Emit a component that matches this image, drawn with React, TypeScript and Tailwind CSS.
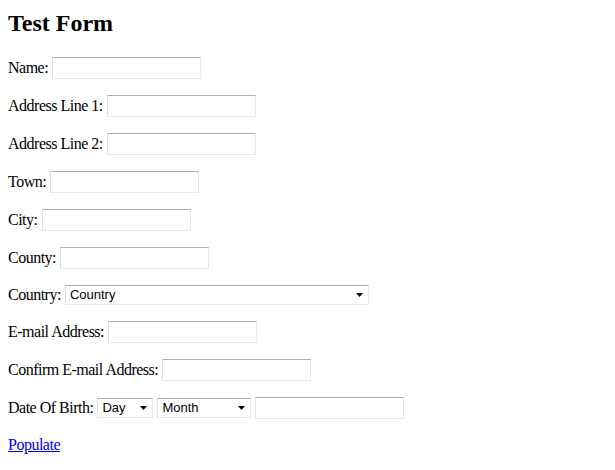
import { ReactNode } from "react";

const serif = "font-['Liberation_Serif','Times_New_Roman',serif]";
const boxBorder =
  "border border-t-[#abadb3] border-l-[#dbdfe6] border-r-[#e3e9ef] border-b-[#e3e9ef]";

function TextBox({ className = "" }: { className?: string }) {
  return (
    <input
      type="text"
      className={`box-border h-[22px] w-[149px] bg-white px-1 outline-none ${boxBorder} ${className}`}
    />
  );
}

function DropDown({ label, width }: { label: string; width: string }) {
  return (
    <div className={`relative box-border h-[20px] bg-white ${width} ${boxBorder}`}>
      <span className="absolute left-[4px] top-[0px] font-['Liberation_Sans',Arial,sans-serif] text-[13px] leading-[18px] text-black">
        {label}
      </span>
      {/* little arrow of the drop-down */}
      <svg
        className="absolute right-[5px] top-[7px]"
        width="7"
        height="4"
        viewBox="0 0 7 4"
      >
        <polygon points="0,0 7,0 3.5,4" fill="#000" />
      </svg>
    </div>
  );
}

function Row({ label, children }: { label: string; children: ReactNode }) {
  return (
    <div className="flex items-center">
      <span className="mr-[4px] text-[16px] leading-[18px] tracking-[-0.5px]">{label}</span>
      {children}
    </div>
  );
}

export default function App() {
  return (
    <div className={`min-h-[470px] bg-white px-2 pt-[9px] text-black ${serif}`}>
      <h1 className="mb-[20px] text-[24px] font-bold leading-[28px]">Test Form</h1>

      <div className="flex flex-col gap-4">
        <Row label="Name:">
          <TextBox />
        </Row>
        <Row label="Address Line 1:">
          <TextBox />
        </Row>
        <Row label="Address Line 2:">
          <TextBox />
        </Row>
        <Row label="Town:">
          <TextBox />
        </Row>
        <Row label="City:">
          <TextBox />
        </Row>
        <Row label="County:">
          <TextBox />
        </Row>
        <Row label="Country:">
          <DropDown label="Country" width="w-[304px]" />
        </Row>
        <Row label="E-mail Address:">
          <TextBox />
        </Row>
        <Row label="Confirm E-mail Address:">
          <TextBox />
        </Row>
        <Row label="Date Of Birth:">
          <div className="flex items-center gap-[4px]">
            <DropDown label="Day" width="w-[56px]" />
            <DropDown label="Month" width="w-[94px]" />
            <TextBox />
          </div>
        </Row>
      </div>

      <a
        href="#"
        className="mt-[17px] block w-fit text-[16px] leading-[18px] tracking-[-0.5px] text-[#0000ee] underline"
      >
        Populate
      </a>
    </div>
  );
}
